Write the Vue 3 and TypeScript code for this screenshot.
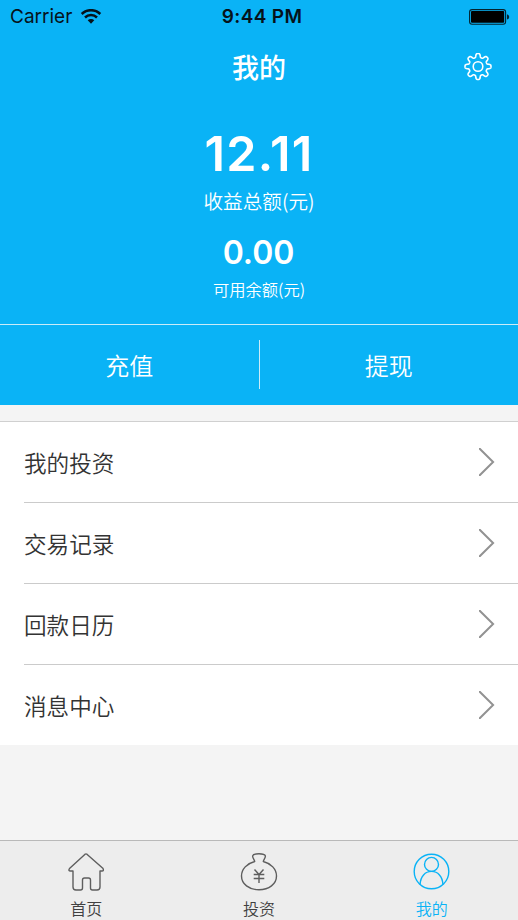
<script setup lang="ts">
interface TabItem {
  key: 'home' | 'invest' | 'mine'
  label: string
}

const actions: string[] = ['充值', '提现']
const menu: string[] = ['我的投资', '交易记录', '回款日历', '消息中心']
const tabs: TabItem[] = [
  { key: 'home', label: '首页' },
  { key: 'invest', label: '投资' },
  { key: 'mine', label: '我的' },
]
const activeTab: TabItem['key'] = 'mine'

// Outline of an eight-toothed gear with rounded teeth
function gearPath(): string {
  const points: string[] = []
  for (let i = 0; i < 240; i++) {
    const a = (i / 240) * Math.PI * 2
    const r = 11.1 + (1.9 * Math.tanh(1.9 * Math.cos(8 * a))) / Math.tanh(1.9)
    points.push(`${(14 + r * Math.sin(a)).toFixed(2)} ${(13.5 - r * Math.cos(a)).toFixed(2)}`)
  }
  return `M${points.join('L')}Z`
}
const gear = gearPath()
</script>

<template>
  <div class="screen">
    <header class="hero">
      <div class="status">
        <div class="carrier">
          <span>Carrier</span>
          <svg class="wifi" width="22" height="16" viewBox="0 0 22 16">
            <g fill="none" stroke="#06121a" stroke-width="2.5">
              <path d="M1.7 5A13.2 13.2 0 0 1 20.3 5" />
              <path d="M5 8.500A8.6 8.6 0 0 1 17 8.500" />
            </g>
            <path d="M7.7 11.3A4.7 4.7 0 0 1 14.3 11.3L11 14.7Z" fill="#06121a" />
          </svg>
        </div>
        <span class="time">9:44 PM</span>
        <svg class="battery" width="41" height="16" viewBox="0 0 41 16">
          <rect x=".6" y=".6" width="36" height="14.6" rx="2.5" fill="none" stroke="#03232f" stroke-width="1.1" />
          <rect x="2" y="2" width="33.2" height="11.8" rx="1" fill="#000" />
          <path d="M38 5.2q2.2.6 2.2 2.7T38 10.6z" fill="#03232f" />
        </svg>
      </div>
      <div class="navbar">
        <h1>我的</h1>
        <svg class="gear" width="28" height="28" viewBox="0 0 28 28" fill="none" stroke="#fff" stroke-width="1.6">
          <path :d="gear" stroke-linejoin="round" />
          <circle cx="14" cy="13.5" r="4.8" />
        </svg>
      </div>
      <div class="total">12.11</div>
      <div class="total-label">收益总额(元)</div>
      <div class="balance">0.00</div>
      <div class="balance-label">可用余额(元)</div>
    </header>

    <div class="actions">
      <div v-for="label in actions" :key="label" class="action">{{ label }}</div>
    </div>

    <main class="menu">
      <div v-for="label in menu" :key="label" class="row">
        <span>{{ label }}</span>
        <svg width="16" height="28" viewBox="0 0 16 28" fill="none" stroke="#929292" stroke-width="2">
          <path d="M-.5 -.5L14.100 14L-.5 28.5" />
        </svg>
      </div>
    </main>

    <nav class="tabbar">
      <div v-for="tab in tabs" :key="tab.key" class="tab" :class="{ active: tab.key === activeTab }">
        <svg width="38" height="38" viewBox="0 0 38 38" fill="none" stroke="currentColor" stroke-width="1.4" stroke-linejoin="round" stroke-linecap="round">
          <path
            v-if="tab.key === 'home'"
            d="M17.8 1.4Q19 .4 20.2 1.4L35.8 15.2Q37.3 18 35 18H33V34Q33 37 30 37H25.5Q23.5 37 23.5 35V27Q23.5 25 21.5 25H17.5Q15.5 25 15.5 27V35Q15.5 37 13.5 37H9Q6 37 6 34V18H3.5Q1 18 2.5 15.5Z"
          />
          <template v-else-if="tab.key === 'invest'">
            <path d="M14.7 8.5C14.5 6.4 12.5 5.3 12.6 2.9C13.2 1 16 .8 19 .8S24.8 1 25.4 2.9C25.5 5.3 23.5 6.4 23.3 8.5C31 10.5 36.5 16 36.5 23C36.5 31 29 36.800 19 36.8S1.5 31 1.5 23C1.5 16 7 10.5 14.7 8.5" />
            <path d="M14.5 16.5L19 21.5L23.5 16.5M13.7 21.5H24.3M13.7 25.5H24.3M19 21.5V30" stroke-linecap="butt" />
          </template>
          <template v-else>
            <circle cx="18.5" cy="18.5" r="17.3" />
            <circle cx="18.5" cy="11.4" r="7" />
            <path d="M7.1 31.2C7.5 23.5 12.1 18.4 18.5 18.4S29.5 23.5 29.9 31.2" />
          </template>
        </svg>
        <span>{{ tab.label }}</span>
      </div>
    </nav>
  </div>
</template>

<style>
body {
  background: #f4f4f4;
}
</style>

<style scoped>
.screen {
  display: flex;
  flex-direction: column;
  height: 920px;
  overflow: hidden;
  background: #f4f4f4;
  font-family: 'Noto Sans CJK SC', sans-serif;
  font-weight: 350;
}
.hero {
  box-sizing: border-box;
  height: 324px;
  background: #0ab3f6;
  color: #fff;
  text-align: center;
}
.status {
  display: grid;
  grid-template-columns: 1fr auto 1fr;
  align-items: center;
  height: 34px;
  padding: 0 8px 0 10px;
  color: #06121a;
  font: 400 19px/34px Inter, sans-serif;
}
.carrier {
  display: flex;
  align-items: center;
  gap: 8px;
}
.time {
  padding-left: 4px;
  font-weight: 600;
  letter-spacing: 0.35px;
}
.battery {
  justify-self: end;
}
.navbar {
  display: grid;
  grid-template-columns: 1fr auto 1fr;
  align-items: center;
  height: 66px;
  padding: 0 26px;
}
h1 {
  grid-column: 2;
  margin: 0;
  font-size: 27px;
  font-weight: 500;
  line-height: 66px;
}
.gear {
  justify-self: end;
}
.total {
  padding-top: 24px;
  font: 600 48.5px/60px Inter, sans-serif;
  letter-spacing: 1.2px;
}
.total-label {
  margin-top: 2px;
  font-size: 19.6px;
  line-height: 30px;
}
.balance {
  margin-top: 17px;
  padding-right: 1px;
  font: 600 32px/40px Inter, sans-serif;
}
.balance-label {
  margin-top: 4px;
  font-size: 16.3px;
  line-height: 24px;
}
.actions {
  display: flex;
  box-sizing: border-box;
  height: 81px;
  padding: 15px 0 16px;
  border-top: 1px solid #c9ecf9;
  background: #0ab3f6;
  color: #fff;
}
.action {
  flex: 1;
  font-size: 24px;
  line-height: 49px;
  text-align: center;
}
.action + .action {
  border-left: 1px solid #c9ecf9;
}
.menu {
  margin-top: 16px;
  padding-left: 24px;
  border-top: 1px solid #d0d0d0;
  background: #fff;
}
.row {
  display: flex;
  box-sizing: border-box;
  align-items: center;
  justify-content: space-between;
  height: 81px;
  padding-right: 23px;
  border-bottom: 1px solid #cbcbcb;
  color: #333;
  font-size: 22.6px;
}
.row:last-child {
  height: 80px;
  border-bottom: 0;
}
.tabbar {
  display: flex;
  box-sizing: border-box;
  height: 80px;
  margin-top: auto;
  border-top: 1px solid #b9b9b9;
  background: #ededed;
}
.tab {
  display: flex;
  flex: 1;
  flex-direction: column;
  align-items: center;
  padding-top: 12px;
  color: #5e5e5e;
  font-size: 16px;
  line-height: 24px;
}
.tab span {
  margin-top: 5px;
  color: #404040;
}
.tab.active,
.tab.active span {
  color: #0ab3f6;
}
</style>
